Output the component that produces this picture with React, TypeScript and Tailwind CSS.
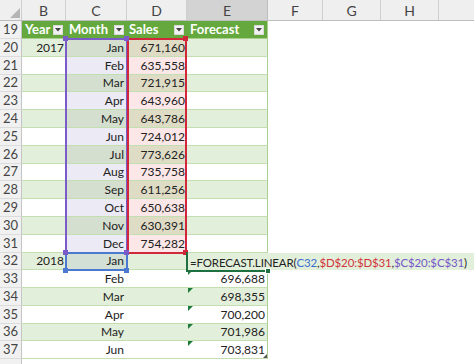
import React from "react";

type Row = {
  n: number;
  h: string;
  b?: string;
  c?: string;
  d?: string;
  e?: string;
};

const rows: Row[] = [
  { n: 20, h: "h-[18px]", b: "2017", c: "Jan", d: "671,160" },
  { n: 21, h: "h-[18px]", c: "Feb", d: "635,558" },
  { n: 22, h: "h-[17px]", c: "Mar", d: "721,915" },
  { n: 23, h: "h-[18px]", c: "Apr", d: "643,960" },
  { n: 24, h: "h-[18px]", c: "May", d: "643,786" },
  { n: 25, h: "h-[18px]", c: "Jun", d: "724,012" },
  { n: 26, h: "h-[18px]", c: "Jul", d: "773,626" },
  { n: 27, h: "h-[17px]", c: "Aug", d: "735,758" },
  { n: 28, h: "h-[18px]", c: "Sep", d: "611,256" },
  { n: 29, h: "h-[18px]", c: "Oct", d: "650,638" },
  { n: 30, h: "h-[18px]", c: "Nov", d: "630,391" },
  { n: 31, h: "h-[18px]", c: "Dec", d: "754,282" },
  { n: 32, h: "h-[17px]", b: "2018", c: "Jan" },
  { n: 33, h: "h-[18px]", c: "Feb", e: "696,688" },
  { n: 34, h: "h-[18px]", c: "Mar", e: "698,355" },
  { n: 35, h: "h-[18px]", c: "Apr", e: "700,200" },
  { n: 36, h: "h-[17px]", c: "May", e: "701,986" },
  { n: 37, h: "h-[18px]", c: "Jun", e: "703,831" },
];

const font = { fontFamily: "Lato, 'Liberation Sans', sans-serif" };

function Dropdown() {
  return (
    <div className="ml-auto mr-[3px] flex h-[10px] w-[10px] shrink-0 items-center justify-center bg-[#f2f2f2] border border-[#d9d9d9]">
      <svg width="6" height="4" viewBox="0 0 6 4">
        <polygon points="0,0 6,0 3,3.5" fill="#444" />
      </svg>
    </div>
  );
}

function Tri() {
  return (
    <svg width="5" height="5" viewBox="0 0 5 5" className="absolute left-[188px] top-0">
      <polygon points="0,0 5,0 0,5" fill="#1d7a3a" />
    </svg>
  );
}

export default function App() {
  const rowNum = "w-[22px] shrink-0 flex items-center justify-center bg-[#f1f1f1] border-r border-r-[#c4c4c4] border-b border-b-[#dcdcdc] text-[#444] text-[13px]";
  return (
    <div className="relative w-[474px] h-[364px] overflow-hidden bg-white text-[12px] text-[#222]" style={font}>
      {/* column header */}
      <div className="flex h-[21px] border-b border-b-[#bdbdbd] bg-[#efefef] text-[14px] text-[#444]">
        <div className="relative w-[22px] shrink-0 border-r border-r-[#cfcfcf]">
          <svg width="10" height="10" viewBox="0 0 10 10" className="absolute left-[10px] top-[8px]">
            <polygon points="10,0 10,10 0,10" fill="#b5b5b5" />
          </svg>
        </div>
        <div className="w-[44px] shrink-0 flex items-center justify-center border-r border-r-[#cfcfcf]">B</div>
        <div className="w-[61px] shrink-0 flex items-center justify-center border-r border-r-[#cfcfcf]">C</div>
        <div className="w-[60px] shrink-0 flex items-center justify-center border-r border-r-[#cfcfcf]">D</div>
        <div className="w-[81px] shrink-0 flex items-center justify-center border-r border-r-[#bdbdbd] bg-[#d3d3d3]">E</div>
        <div className="w-[55px] shrink-0 flex items-center justify-center border-r border-r-[#cfcfcf]">F</div>
        <div className="w-[58px] shrink-0 flex items-center justify-center border-r border-r-[#cfcfcf]">G</div>
        <div className="w-[58px] shrink-0 flex items-center justify-center border-r border-r-[#cfcfcf]">H</div>
        <div className="flex-1" />
      </div>

      {/* header row 19 */}
      <div className="flex h-[18px]">
        <div className={rowNum}>19</div>
        <div className="flex w-[246px] shrink-0 bg-[#64a83e] border-b border-b-[#a9d08e] text-white font-bold text-[13px]">
          <div className="w-[44px] shrink-0 flex items-center pl-[3px]">Year<Dropdown /></div>
          <div className="w-[61px] shrink-0 flex items-center pl-[3px]">Month<Dropdown /></div>
          <div className="w-[60px] shrink-0 flex items-center pl-[2px]">Sales<Dropdown /></div>
          <div className="w-[81px] shrink-0 flex items-center pl-[3px] border-r border-r-[#a9d08e]">Forecast<Dropdown /></div>
        </div>
        <div className="flex-1" />
      </div>

      {rows.map((r) => {
        const even = r.n % 2 === 0;
        const band = even ? "bg-[#e2efda]" : "bg-white";
        const inRange = r.n >= 20 && r.n <= 31;
        const cBg = inRange ? (even ? "bg-[#d5dfd0]" : "bg-[#eceaf4]") : r.n === 32 ? "bg-[#d3e0d6]" : band;
        const dBg = inRange ? (even ? "bg-[#dfdcc6]" : "bg-[#fbe7e7]") : band;
        const cell = "shrink-0 flex items-end justify-end pr-[2px] pb-[2px] border-b border-b-[#c3deb0] leading-none";
        return (
          <div key={r.n} className={`relative flex ${r.h}`}>
            <div className={`${rowNum} ${r.n === 32 ? "bg-[#d3d3d3]" : ""}`}>{r.n}</div>
            <div className={`w-[44px] ${cell} ${band}`}>{r.b}</div>
            <div className={`w-[61px] ${cell} ${cBg} pr-[3px]`}>{r.c}</div>
            <div className={`w-[60px] ${cell} ${dBg}`}>{r.d}</div>
            {r.n === 32 ? (
              <div className="flex-1 flex items-end pl-[3px] pb-[2px] bg-[#e2efda] leading-none whitespace-nowrap text-[11.5px] tracking-[-0.15px]">
                <span>=FORECAST.LINEAR(</span>
                <span className="text-[#3d6fd0]">C32</span>
                <span>,</span>
                <span className="text-[#d2343c]">$D$20:$D$31</span>
                <span>,</span>
                <span className="text-[#7658c8]">$C$20:$C$31</span>
                <span>)</span>
              </div>
            ) : (
              <>
                <div className={`w-[81px] ${cell} ${band} border-r border-r-[#a9d08e]`}>{r.e}</div>
                <div className="flex-1" />
              </>
            )}
            {r.n >= 33 && <Tri />}
          </div>
        );
      })}

      {/* row 38 partial */}
      <div className="flex h-[10px]">
        <div className="w-[22px] shrink-0 bg-[#f1f1f1] border-r border-r-[#c4c4c4]" />
        <div className="flex-1" />
      </div>

      {/* reference range highlights */}
      <div className="absolute left-[65px] top-[38px] w-[63px] h-[216px] border-2 border-[#7a5cc8]" />
      <div className="absolute left-[127px] top-[38px] w-[60px] h-[216px] border-2 border-[#d0283a]" />
      <div className="absolute left-[65px] top-[252px] w-[63px] h-[19px] border-2 border-[#4a79cf]" />

      {/* handles */}
      <div className="absolute left-[63px] top-[36px] w-[5px] h-[5px] bg-[#7a5cc8]" />
      <div className="absolute left-[124px] top-[36px] w-[5px] h-[5px] bg-[#7a5cc8]" />
      <div className="absolute left-[183px] top-[36px] w-[5px] h-[5px] bg-[#d0283a]" />
      <div className="absolute left-[183px] top-[250px] w-[5px] h-[5px] bg-[#d0283a]" />
      <div className="absolute left-[63px] top-[250px] w-[5px] h-[5px] bg-[#7a5cc8]" />
      <div className="absolute left-[124px] top-[250px] w-[5px] h-[5px] bg-[#7a5cc8]" />
      <div className="absolute left-[63px] top-[268px] w-[5px] h-[5px] bg-[#4a79cf]" />
      <div className="absolute left-[124px] top-[268px] w-[5px] h-[5px] bg-[#4a79cf]" />

      {/* active cell E32 */}
      <div className="absolute left-[186px] top-[252px] w-[83px] h-[20px] border-l-2 border-b-2 border-[#1f7040]" />
      <div className="absolute left-[265px] top-[268px] w-[6px] h-[6px] bg-[#1f7040] border border-white" />

      {/* table resize handle */}
      <svg width="4" height="4" viewBox="0 0 4 4" className="absolute left-[263px] top-[354px]">
        <polygon points="4,0 4,4 0,4" fill="#555" />
      </svg>
    </div>
  );
}
